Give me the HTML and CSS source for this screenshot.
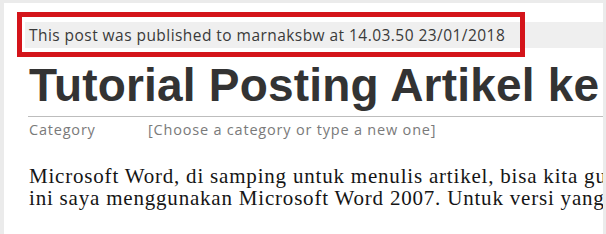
FILE: index.html
```html
<!DOCTYPE html>
<html>
<head>
<meta charset="utf-8">
<link rel="stylesheet" href="styles.css">
</head>
<body>
<div class="page">
  <div class="status">This post was published to marnaksbw at 14.03.50 23/01/2018</div>
  <div class="highlight"></div>
  <h1 class="title">Tutorial Posting Artikel ke</h1>
  <div class="rule"></div>
  <div class="category">
    <span class="cat-label">Category</span>
    <span class="cat-value">[Choose a category or type a new one]</span>
  </div>
  <div class="body-text">
    <p>Microsoft Word, di samping untuk menulis artikel, bisa kita gunakan</p>
    <p>ini saya menggunakan Microsoft Word 2007. Untuk versi yang</p>
  </div>
</div>
</body>
</html>
```
FILE: styles.css
```css
html, body {
  margin: 0;
  padding: 0;
  background: #ebebeb;
  overflow: hidden;
}
.page {
  position: relative;
  margin: 3px 3px 0 4px;
  height: 231px;
  background: #ffffff;
  overflow: hidden;
}
.status {
  margin: 19px 0 0 21px;
  height: 26px;
  padding-left: 4px;
  background: #efefef;
  font-family: "Open Sans", sans-serif;
  font-size: 15.5px;
  letter-spacing: 0.45px;
  line-height: 26px;
  color: #3a3a3a;
  white-space: nowrap;
}
.highlight {
  position: absolute;
  left: 13px;
  top: 9px;
  width: 508px;
  height: 45px;
  box-sizing: border-box;
  border: 5px solid #d4141a;
}
.title {
  margin: 14px 0 0 25px;
  font-family: "Liberation Sans", Arial, sans-serif;
  font-weight: bold;
  font-size: 46px;
  letter-spacing: 0.2px;
  line-height: 46px;
  color: #333333;
  white-space: nowrap;
}
.rule {
  margin: 8px 0 0 24px;
  height: 1px;
  background: #bdbdbd;
}
.category {
  display: flex;
  margin: 3px 0 0 25px;
  font-family: "Open Sans", sans-serif;
  font-size: 14.5px;
  letter-spacing: 0.8px;
  line-height: 20px;
  color: #7a7a7a;
  white-space: nowrap;
}
.cat-label {
  width: 119px;
}
.body-text {
  margin: 25px 0 0 25px;
  font-family: "Liberation Serif", "Times New Roman", serif;
  font-size: 21px;
  letter-spacing: 0.8px;
  line-height: 22px;
  color: #151515;
  white-space: nowrap;
}
.body-text p {
  margin: 0;
}
```
